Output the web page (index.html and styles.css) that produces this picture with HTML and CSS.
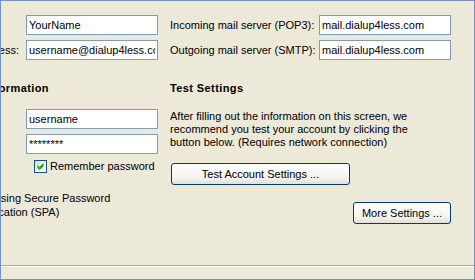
FILE: index.html
```html
<!DOCTYPE html>
<html lang="en">
<head>
    <meta charset="UTF-8">
    <title>E-mail Account Settings</title>
    <link rel="stylesheet" href="styles.css">
</head>
<body>
    <div class="dialog">
        <div class="columns">
            <!-- User / logon information -->
            <div class="col left-col">
                <div class="field-row">
                    <span class="label">Your Name:</span>
                    <input class="textbox" type="text" value="YourName">
                </div>
                <div class="field-row">
                    <span class="label">E-mail Address:</span>
                    <input class="textbox" type="text" value="username@dialup4less.com">
                </div>
                <h2 class="group-title logon-title">Logon Information</h2>
                <div class="field-row">
                    <span class="label">User Name:</span>
                    <input class="textbox" type="text" value="username">
                </div>
                <div class="field-row">
                    <span class="label">Password:</span>
                    <input class="textbox" type="text" value="********">
                </div>
                <label class="check remember">
                    <span class="checkbox">
                        <svg width="7" height="7" viewBox="0 0 7 7"><path d="M0.5 2.5 L2.5 4.5 L6.5 0.5 M0.5 3.5 L2.5 5.5 L6.5 1.5 M0.5 4.5 L2.5 6.5 L6.5 2.5" stroke="#21a121" stroke-width="1" fill="none"/></svg>
                    </span>
                    Remember password
                </label>
                <label class="check spa">
                    <span class="checkbox"></span>
                    <span class="spa-text">Log on using Secure Password Authentication (SPA)</span>
                </label>
            </div>

            <!-- Server information / test settings -->
            <div class="col right-col">
                <div class="field-row">
                    <span class="label">Incoming mail server (POP3):</span>
                    <input class="textbox" type="text" value="mail.dialup4less.com">
                </div>
                <div class="field-row">
                    <span class="label">Outgoing mail server (SMTP):</span>
                    <input class="textbox" type="text" value="mail.dialup4less.com">
                </div>
                <h2 class="group-title">Test Settings</h2>
                <p class="test-info">After filling out the information on this screen, we recommend you test your account by clicking the button below. (Requires network connection)</p>
                <button class="xp-button test-button">Test Account Settings ...</button>
                <div class="more-row">
                    <button class="xp-button more-button">More Settings ...</button>
                </div>
            </div>
        </div>
        <div class="separator"></div>
    </div>
</body>
</html>
```

FILE: styles.css
```css
html, body {
    margin: 0;
    padding: 0;
}
body {
    width: 475px;
    height: 280px;
    overflow: hidden;
    background-color: #ece9d8;
    font-family: 'Liberation Sans', Arial, sans-serif;
    font-size: 11px;
    color: #000;
}
.dialog {
    box-sizing: border-box;
    width: 475px;
    height: 280px;
    border: 1px solid #7393c4;
    overflow: hidden;
    display: flex;
    flex-direction: column;
}
.columns {
    display: flex;
    gap: 12px;
    padding-top: 14px;
    height: 250px;
}
.col {
    display: flex;
    flex-direction: column;
}
.left-col {
    width: 258px;
    margin-left: -101px;
}
.right-col {
    width: 281px;
}
.field-row {
    display: flex;
    align-items: center;
    height: 20px;
    margin-bottom: 5px;
}
.left-col .label {
    width: 127px;
    padding-left: 42px;
    box-sizing: border-box;
}
.right-col .label {
    width: 149px;
}
.textbox {
    box-sizing: border-box;
    width: 132px;
    height: 20px;
    margin: 0;
    padding: 0 2px;
    border: 1px solid #7f9db9;
    background: #fff;
    font-family: 'Liberation Sans', Arial, sans-serif;
    font-size: 11px;
    color: #000;
    outline: none;
}
.group-title {
    margin: 17px 0 0 0;
    font-size: 11px;
    line-height: 13px;
    font-weight: bold;
    letter-spacing: 0.4px;
}
.logon-title {
    padding-left: 45px;
}
.left-col .logon-title + .field-row {
    margin-top: 14px;
}
.check {
    display: flex;
    align-items: center;
    gap: 3px;
    line-height: 13px;
}
.remember {
    margin-left: 134px;
    margin-top: 1px;
}
.checkbox {
    box-sizing: border-box;
    width: 13px;
    height: 13px;
    border: 1px solid #1c5180;
    background: linear-gradient(135deg, #dcdcd7, #fff);
    display: flex;
    align-items: center;
    justify-content: center;
    flex-shrink: 0;
}
.spa {
    margin-top: 18px;
    margin-left: 40px;
    align-items: flex-start;
    gap: 5px;
    line-height: 14px;
}
.spa-text {
    width: 160px;
}
.test-info {
    margin: 15px 0 0 0;
    line-height: 13px;
    width: 250px;
}
.xp-button {
    box-sizing: border-box;
    height: 22px;
    padding: 0;
    border: 1px solid #003c74;
    border-radius: 3px;
    background: linear-gradient(#ffffff, #f4f3ee 70%, #e3e0d5);
    font-family: 'Liberation Sans', Arial, sans-serif;
    font-size: 11px;
    color: #000;
}
.test-button {
    width: 179px;
    margin-top: 14px;
    margin-left: 1px;
}
.more-row {
    display: flex;
    justify-content: flex-end;
    margin-top: 17px;
}
.more-button {
    width: 98px;
}
.separator {
    border-top: 1px solid #aca899;
    border-bottom: 1px solid #fff;
}
```
